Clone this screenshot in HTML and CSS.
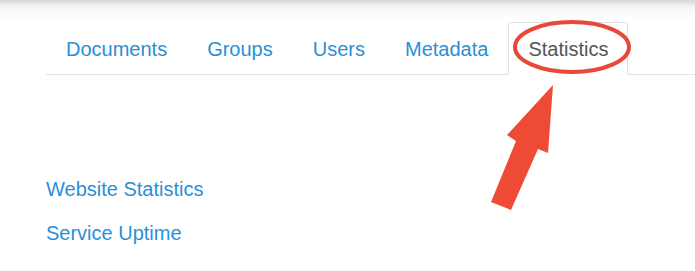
FILE: index.html
```html
<!DOCTYPE html>
<html lang="en">
<head>
  <meta charset="UTF-8">
  <title>Admin - Statistics</title>
  <link rel="stylesheet" href="styles.css">
</head>
<body>
  <div class="topbar"></div>
  <div class="page">
    <ul class="tabs">
      <li><a href="#">Documents</a></li>
      <li><a href="#">Groups</a></li>
      <li><a href="#">Users</a></li>
      <li><a href="#">Metadata</a></li>
      <li class="active"><a href="#">Statistics</a></li>
    </ul>
    <div class="links">
      <a href="#">Website Statistics</a>
      <a href="#">Service Uptime</a>
    </div>
  </div>

  <!-- annotation drawn over the screenshot -->
  <svg class="markup" width="695" height="271" viewBox="0 0 695 271">
    <ellipse cx="572" cy="47" rx="57" ry="25" fill="none" stroke="#e8473a" stroke-width="4"/>
    <polygon points="553,85 548,153 538,149 511,210 491,202 516,141 507,135" fill="#ef4a36"/>
  </svg>
</body>
</html>
```

FILE: styles.css
```css
* {
  box-sizing: border-box;
}

body {
  margin: 0;
  background: #fff;
  font-family: "Liberation Sans", Arial, sans-serif;
  font-size: 20px;
  line-height: 23px;
  position: relative;
  height: 271px;
  overflow: hidden;
}

.topbar {
  height: 20px;
  background: linear-gradient(#d6d6d6 0, #e4e4e4 3px, #f4f4f4 6px, #fff 20px);
}

.page {
  padding-left: 46px;
  padding-top: 2px;
}

.tabs {
  list-style: none;
  margin: 0;
  padding: 0;
  display: flex;
  border-bottom: 1px solid #e3e3e3;
}

.tabs li {
  margin-bottom: -1px;
}

.tabs a {
  display: block;
  padding: 15px 19px 13px;
  border: 1px solid transparent;
  border-radius: 4px 4px 0 0;
  color: #2a8fd7;
  text-decoration: none;
}

.tabs .active a {
  color: #555;
  background: #fff;
  border-color: #e0e0e0;
  border-bottom-color: #fff;
}

.links {
  display: flex;
  flex-direction: column;
  align-items: flex-start;
  gap: 21px;
  margin-top: 103px;
}

.links a {
  color: #2a8fd7;
  text-decoration: none;
}

.markup {
  position: absolute;
  top: 0;
  left: 0;
}
```
